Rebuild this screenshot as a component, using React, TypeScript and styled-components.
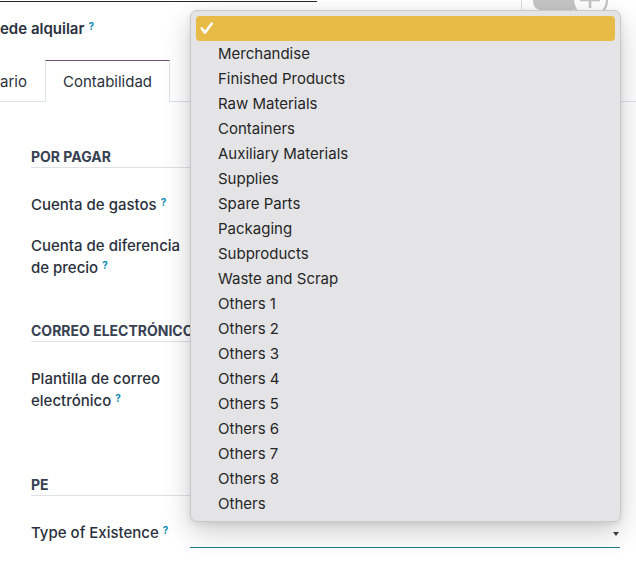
import React from "react";
import styled, { createGlobalStyle } from "styled-components";

const GlobalStyle = createGlobalStyle`
  html, body {
    margin: 0;
    padding: 0;
    background: #ffffff;
  }
  body {
    font-family: Inter, "Noto Sans", "Liberation Sans", sans-serif;
    -webkit-font-smoothing: antialiased;
  }
`;

const Page = styled.div`
  position: relative;
  width: 636px;
  height: 582px;
  overflow: hidden;
  background: #ffffff;
`;

const TopRow = styled.div`
  display: flex;
  height: 60px;
`;

const TopLeft = styled.div`
  display: flex;
  flex-direction: column;
`;

const FieldLine = styled.div`
  width: 317px;
  height: 1px;
  margin-top: 1px;
  background: #23272e;
`;

const CheckLabel = styled.div`
  margin-top: 16px;
  font-size: 15px;
  line-height: 22px;
  font-weight: 600;
  color: #2a313c;
`;

const ImageBox = styled.div`
  margin-left: auto;
  margin-right: 22px;
  width: 92px;
  height: 50px;
  border-left: 1px solid #dedede;
`;

const Help = styled.sup`
  position: relative;
  top: -4px;
  margin-left: 4px;
  font-size: 10px;
  line-height: 10px;
  font-weight: 700;
  color: #0b8bb5;
  vertical-align: baseline;
`;

const TabBar = styled.div`
  display: flex;
  height: 41px;
  border-bottom: 1px solid #dee2e6;
`;

const Tab = styled.div<{ $active?: boolean; $clipped?: boolean }>`
  display: flex;
  align-items: center;
  box-sizing: border-box;
  height: ${(p) => (p.$active ? "42px" : "41px")};
  padding: ${(p) => (p.$clipped ? "0 17px 0 0" : "0 17px")};
  font-size: 15px;
  color: #2a313c;
  background: #ffffff;
  border-top: 1px solid ${(p) => (p.$active ? "#714b67" : "transparent")};
  border-left: 1px solid ${(p) => (p.$active ? "#dee2e6" : "transparent")};
  border-right: 1px solid ${(p) => (p.$active ? "#dee2e6" : "transparent")};
  ${(p) => (p.$clipped ? "border-left: none;" : "")}
`;

const Sheet = styled.div`
  padding: 0 16px 0 31px;
`;

const Section = styled.section<{ $gap: number }>`
  margin-top: ${(p) => p.$gap}px;
`;

const SectionTitle = styled.div`
  height: 20px;
  line-height: 20px;
  font-size: 14px;
  font-weight: 700;
  color: #374151;
  text-transform: uppercase;
  white-space: nowrap;
  border-bottom: 1px solid #dfe1e4;
`;

const FieldList = styled.div`
  display: flex;
  flex-direction: column;
  gap: 19px;
  padding-top: 26px;
`;

const FieldRow = styled.div`
  display: grid;
  grid-template-columns: 159px 1fr;
  align-items: start;
`;

const Label = styled.div`
  display: flex;
  flex-direction: column;
  font-size: 15px;
  line-height: 22px;
  font-weight: 500;
  color: #2a313c;
`;

const LabelLine = styled.span`
  display: block;
  white-space: nowrap;
`;

const Select = styled.div`
  position: relative;
  height: 25px;
  border-bottom: 1px solid #1b7c82;
`;

const Caret = styled.span`
  position: absolute;
  right: 1px;
  top: 10px;
  width: 0;
  height: 0;
  border-left: 3px solid transparent;
  border-right: 3px solid transparent;
  border-top: 4px solid #3a3f45;
`;

const Menu = styled.div`
  position: absolute;
  left: 190px;
  top: 10px;
  width: 431px;
  box-sizing: border-box;
  padding: 5px;
  background: #e4e4e6;
  border: 1px solid #c9c9cb;
  border-radius: 7px;
  box-shadow: 0 10px 28px rgba(0, 0, 0, 0.2), 0 2px 6px rgba(0, 0, 0, 0.08);
`;

const MenuItem = styled.div<{ $selected?: boolean }>`
  position: relative;
  height: 25px;
  line-height: 25px;
  padding-left: 22px;
  font-size: 15px;
  color: #262626;
  border-radius: 4px;
  background: ${(p) => (p.$selected ? "#e8bb46" : "transparent")};
`;

const Check = styled.svg`
  position: absolute;
  left: 4px;
  top: 6px;
`;

const options = [
  "",
  "Merchandise",
  "Finished Products",
  "Raw Materials",
  "Containers",
  "Auxiliary Materials",
  "Supplies",
  "Spare Parts",
  "Packaging",
  "Subproducts",
  "Waste and Scrap",
  "Others 1",
  "Others 2",
  "Others 3",
  "Others 4",
  "Others 5",
  "Others 6",
  "Others 7",
  "Others 8",
  "Others",
];

export default function App() {
  return (
    <>
      <GlobalStyle />
      <Page>
        <TopRow>
          <TopLeft>
            <FieldLine />
            <CheckLabel>
              ede alquilar<Help>?</Help>
            </CheckLabel>
          </TopLeft>
          <ImageBox>
            <svg width="92" height="50" viewBox="0 0 92 50">
              <rect x="11" y="-20" width="46" height="30" rx="8" fill="#c6c6c6" />
              <circle cx="68" cy="0" r="17" fill="#ffffff" stroke="#c4c4c4" strokeWidth="2.2" />
              <rect x="66.8" y="-10" width="2.5" height="18" fill="#c4c4c4" />
              <rect x="58" y="-1.2" width="20" height="2.5" fill="#c4c4c4" />
            </svg>
          </ImageBox>
        </TopRow>

        <TabBar>
          <Tab $clipped>ario</Tab>
          <Tab $active>Contabilidad</Tab>
        </TabBar>

        <Sheet>
          <Section $gap={45}>
            <SectionTitle>Por pagar</SectionTitle>
            <FieldList>
              <FieldRow>
                <Label>
                  <LabelLine>
                    Cuenta de gastos<Help>?</Help>
                  </LabelLine>
                </Label>
              </FieldRow>
              <FieldRow>
                <Label>
                  <LabelLine>Cuenta de diferencia</LabelLine>
                  <LabelLine>
                    de precio<Help>?</Help>
                  </LabelLine>
                </Label>
              </FieldRow>
            </FieldList>
          </Section>

          <Section $gap={42}>
            <SectionTitle>Correo electrónico</SectionTitle>
            <FieldList>
              <FieldRow>
                <Label>
                  <LabelLine>Plantilla de correo</LabelLine>
                  <LabelLine>
                    electrónico<Help>?</Help>
                  </LabelLine>
                </Label>
              </FieldRow>
            </FieldList>
          </Section>

          <Section $gap={63}>
            <SectionTitle>PE</SectionTitle>
            <FieldList>
              <FieldRow>
                <Label>
                  <LabelLine>
                    Type of Existence<Help>?</Help>
                  </LabelLine>
                </Label>
                <Select>
                  <Caret />
                </Select>
              </FieldRow>
            </FieldList>
          </Section>
        </Sheet>

        <Menu>
          {options.map((o, i) => (
            <MenuItem key={i} $selected={i === 0}>
              {i === 0 && (
                <Check width="14" height="13" viewBox="0 0 14 13">
                  <path
                    d="M1.8 6.5 L5 10.6 L11.8 1.5"
                    fill="none"
                    stroke="#ffffff"
                    strokeWidth="2.6"
                    strokeLinecap="round"
                    strokeLinejoin="round"
                  />
                </Check>
              )}
              {o}
            </MenuItem>
          ))}
        </Menu>
      </Page>
    </>
  );
}
